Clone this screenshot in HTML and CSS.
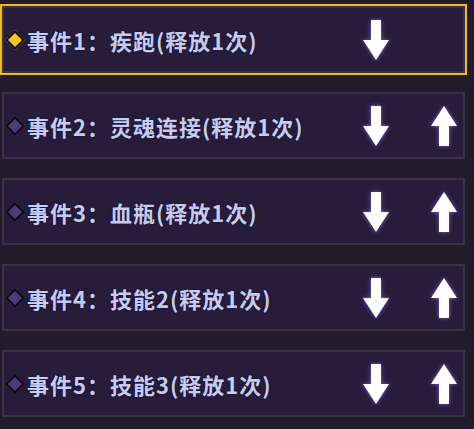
FILE: index.html
```html
<!DOCTYPE html>
<html lang="zh-CN">

<head>
    <meta charset="UTF-8">
    <meta name="viewport" content="width=device-width, initial-scale=1.0">
    <title>事件列表</title>
    <link rel="stylesheet" href="styles.css">
</head>

<body>
    <div class="event-list">
        <div class="event-row selected">
            <span class="marker"></span>
            <span class="event-name">事件1：疾跑(释放1次)</span>
            <div class="controls">
                <span class="arrow-btn">
                    <svg viewBox="0 0 26 40" width="26" height="40"><path d="M8 0H18V20H26L13 40L0 20H8Z" /></svg>
                </span>
                <span class="arrow-btn hidden">
                    <svg viewBox="0 0 26 40" width="26" height="40"><path d="M8 40H18V20H26L13 0L0 20H8Z" /></svg>
                </span>
            </div>
        </div>

        <div class="event-row">
            <span class="marker"></span>
            <span class="event-name">事件2：灵魂连接(释放1次)</span>
            <div class="controls">
                <span class="arrow-btn">
                    <svg viewBox="0 0 26 40" width="26" height="40"><path d="M8 0H18V20H26L13 40L0 20H8Z" /></svg>
                </span>
                <span class="arrow-btn">
                    <svg viewBox="0 0 26 40" width="26" height="40"><path d="M8 40H18V20H26L13 0L0 20H8Z" /></svg>
                </span>
            </div>
        </div>

        <div class="event-row">
            <span class="marker"></span>
            <span class="event-name">事件3：血瓶(释放1次)</span>
            <div class="controls">
                <span class="arrow-btn">
                    <svg viewBox="0 0 26 40" width="26" height="40"><path d="M8 0H18V20H26L13 40L0 20H8Z" /></svg>
                </span>
                <span class="arrow-btn">
                    <svg viewBox="0 0 26 40" width="26" height="40"><path d="M8 40H18V20H26L13 0L0 20H8Z" /></svg>
                </span>
            </div>
        </div>

        <div class="event-row">
            <span class="marker"></span>
            <span class="event-name">事件4：技能2(释放1次)</span>
            <div class="controls">
                <span class="arrow-btn">
                    <svg viewBox="0 0 26 40" width="26" height="40"><path d="M8 0H18V20H26L13 40L0 20H8Z" /></svg>
                </span>
                <span class="arrow-btn">
                    <svg viewBox="0 0 26 40" width="26" height="40"><path d="M8 40H18V20H26L13 0L0 20H8Z" /></svg>
                </span>
            </div>
        </div>

        <div class="event-row">
            <span class="marker"></span>
            <span class="event-name">事件5：技能3(释放1次)</span>
            <div class="controls">
                <span class="arrow-btn">
                    <svg viewBox="0 0 26 40" width="26" height="40"><path d="M8 0H18V20H26L13 40L0 20H8Z" /></svg>
                </span>
                <span class="arrow-btn">
                    <svg viewBox="0 0 26 40" width="26" height="40"><path d="M8 40H18V20H26L13 0L0 20H8Z" /></svg>
                </span>
            </div>
        </div>
    </div>
</body>

</html>
```

FILE: styles.css
```css
html,
body {
    height: 100%;
}

body {
    margin: 0;
    padding: 6px 0 0 2px;
    background-color: #211b2b;
    font-family: "Noto Sans CJK SC", "Noto Sans", sans-serif;
    overflow: hidden;
}

.event-list {
    display: flex;
    flex-direction: column;
    gap: 19px;
    width: 463px;
}

.event-row {
    display: flex;
    align-items: center;
    height: 67px;
    box-sizing: border-box;
    border: 2px solid #3a3347;
    background-color: #271d3b;
    padding: 0 6px 0 0;
}

.event-row.selected {
    outline: 2px solid #f1b928;
}

.marker {
    width: 10px;
    height: 10px;
    margin: 0 5px 0 4px;
    flex-shrink: 0;
    border: 2px solid #0d0a12;
    background-color: #4d3c7c;
    transform: rotate(45deg);
}

.selected .marker {
    background-color: #f6c51c;
}

.event-name {
    flex: 1;
    color: #c7cbf2;
    font-size: 22px;
    font-weight: bold;
    letter-spacing: 1px;
    white-space: nowrap;
    text-shadow: 0 0 2px #15101f;
}

.controls {
    display: flex;
    gap: 42px;
}

.arrow-btn {
    display: flex;
    width: 26px;
    height: 40px;
}

.arrow-btn svg {
    fill: #ffffff;
    filter: drop-shadow(0 0 2px #7b5fd6);
}

.arrow-btn.hidden {
    visibility: hidden;
}
```
